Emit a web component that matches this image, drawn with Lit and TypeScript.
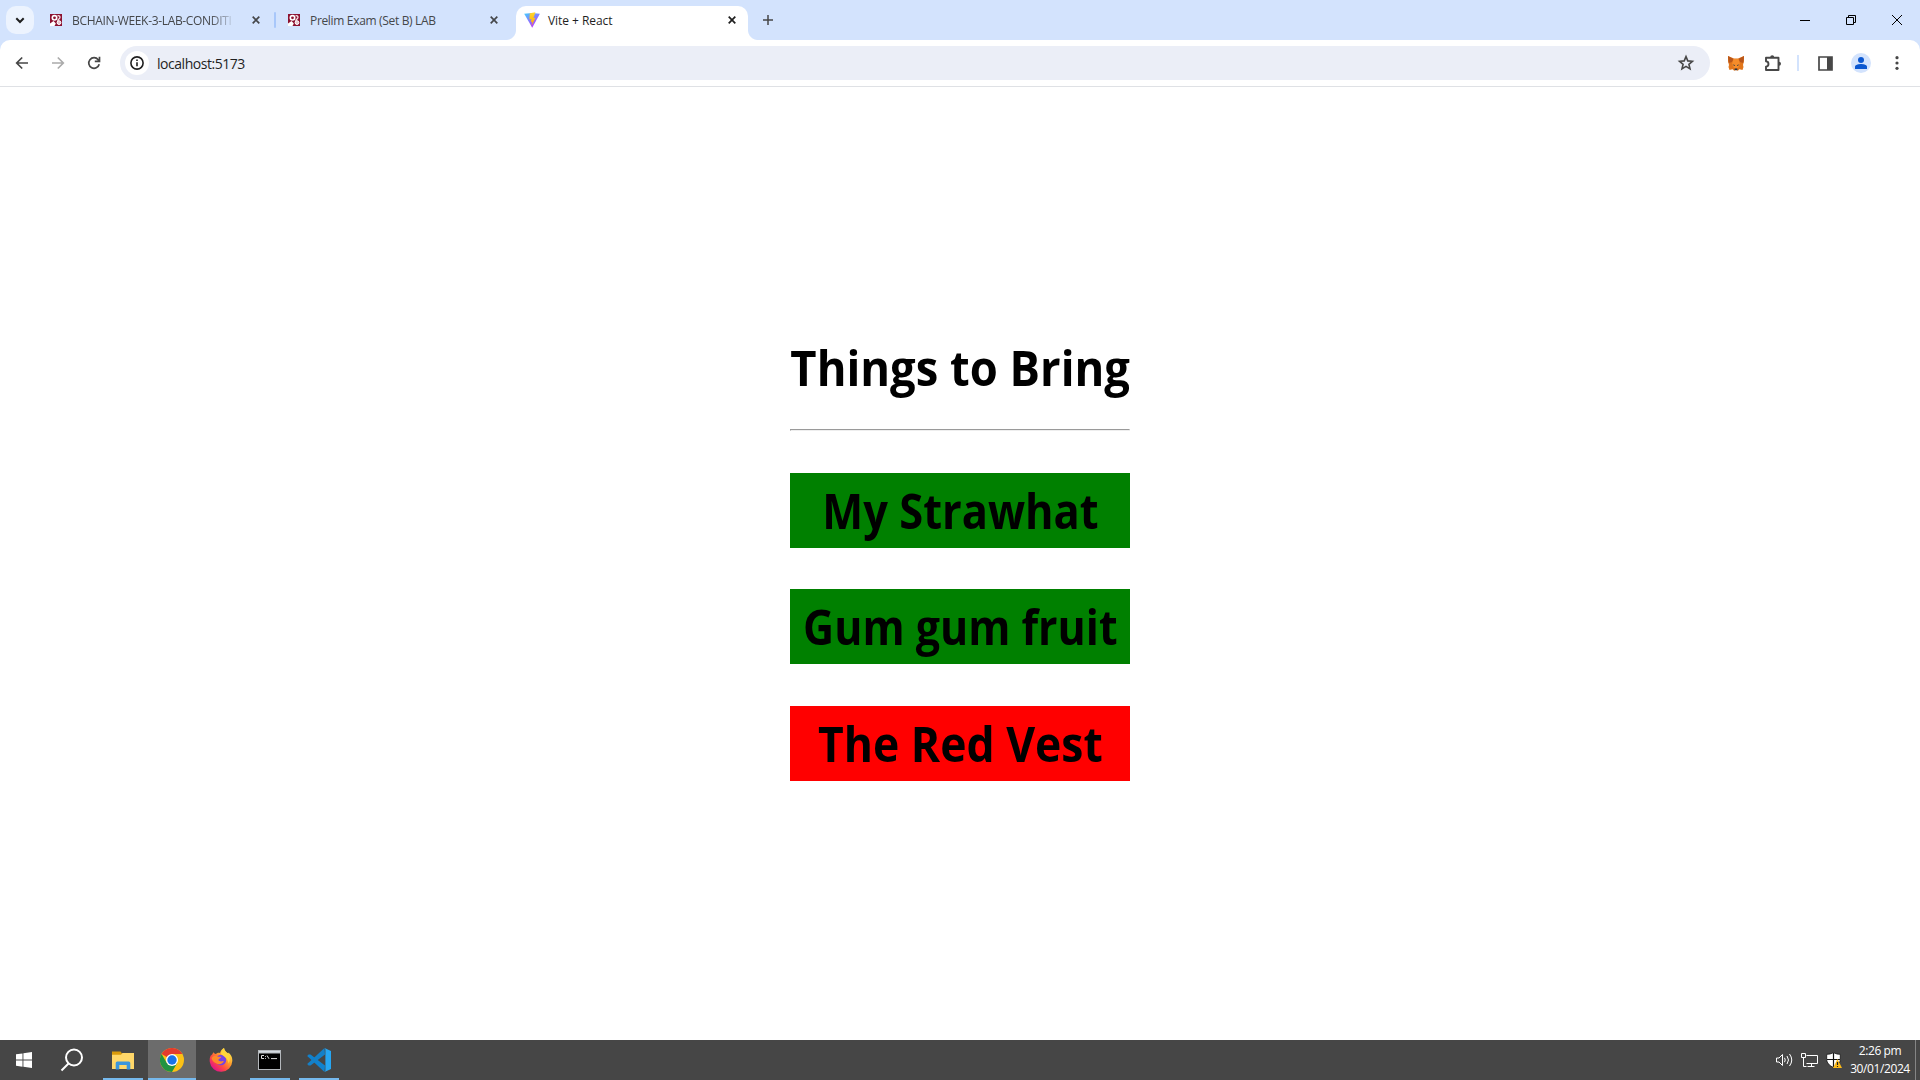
import { LitElement, html, css } from "lit";
import { customElement, property } from "lit/decorators.js";

const cross = html`<svg class="x" width="8" height="8" viewBox="0 0 8 8"><path d="M.7.7 7.3 7.3M7.3.7.7 7.3" stroke="currentColor" stroke-width="1.7"/></svg>`;

const schoolIcon = html`<svg width="12" height="12" viewBox="0 0 12 12"><path fill="#8c1230" d="M0 0h12v12H0z"/><circle cx="4.500" cy="3.800" r="2.200" fill="none" stroke="#fff" stroke-width="1.600"/><path d="M0 12V9.500L3.500 7l2.300 2.500L4.500 12z" fill="#fff"/><path d="M7.500 1.800c2-.6 3 .8 2.200 2.400L8 6v4" fill="none" stroke="#f3dce1" stroke-width="1.400"/><circle cx="9" cy="8.600" r="1.900" fill="#e9c3cc" stroke="#fff"/></svg>`;

const viteIcon = html`<svg width="16" height="16" viewBox="0 0 16 16"><defs><linearGradient id="va" x1="0" y1="0" x2=".6" y2="1"><stop stop-color="#41d1ff"/><stop offset="1" stop-color="#bd34fe"/></linearGradient><linearGradient id="vb" x1="0" y1="0" x2="0" y2="1"><stop stop-color="#ffd62e"/><stop offset="1" stop-color="#ffa800"/></linearGradient></defs><path fill="url(#va)" d="M.2 1.800 8 .9l7.900.9L8.200 15.800z"/><path fill="url(#vb)" d="M11.400.2 5.800 1.300 5.400 7.500l2-.4-.6 3 1.600-.4-.9 4.300 4-8.300-2 .4z"/></svg>`;

const icons = {
  start: html`<svg width="16" height="16" viewBox="0 0 16 16" fill="#fff"><path d="M0 2.300 6.500 1.400v6.200H0zM7.400 1.300 16 0v7.600H7.400zM0 8.500h6.500v6.200L0 13.800zM7.400 8.500H16V16l-8.600-1.300z"/></svg>`,
  search: html`<svg width="24" height="24" viewBox="0 0 24 24" fill="none" stroke="#fff" stroke-width="2"><circle cx="14" cy="9.500" r="8"/><path d="M8.500 15.500 1.500 22.500"/></svg>`,
  explorer: html`<svg width="22" height="19" viewBox="0 0 22 19"><path fill="#d99a0b" d="M0 .5h8.500l1.500 2H22V5H0z"/><path fill="#ffd769" d="M0 3.800h9L10.500 2H22v16H0z"/><path fill="#3a96dd" d="M3.700 18.500V12q0-1.500 1.500-1.500h11.600q1.500 0 1.500 1.500v6.500h-3.600V14H7.300v4.500z"/></svg>`,
  chrome: html`<svg width="24" height="24" viewBox="0 0 24 24"><circle cx="12" cy="12" r="12" fill="#fbc116"/><path fill="#e33b2e" d="M12 12 1.600 6A12 12 0 0 1 22.400 6H12z"/><path fill="#229342" d="M1.600 6A12 12 0 0 0 12 24l5.200-9L12 12 6.800 15z"/><circle cx="12" cy="12" r="6" fill="#fff"/><circle cx="12" cy="12" r="4.700" fill="#1a73e8"/></svg>`,
  firefox: html`<svg width="24" height="24" viewBox="0 0 24 24"><defs><linearGradient id="fa" x1=".9" y1=".1" x2=".2" y2=".9"><stop stop-color="#fff44f"/><stop offset=".4" stop-color="#ff9a2b"/><stop offset=".7" stop-color="#ff4a45"/><stop offset="1" stop-color="#e31587"/></linearGradient></defs><path fill="url(#fa)" d="M4.500 4.200c.6 1 1.300 1.600 2.300 1.800C8.500 4.500 10 4.600 11 5c.6-2.200 2-4 4-5 .3 2.800 2.200 4 4.200 5.600l.3-1.200c2.600 2.200 4 5 3.800 8.500A11.300 11.300 0 0 1 .8 14C.3 10.500 1.300 8 2.500 6.600l.2 1.200C3 6.500 3.600 5.200 4.500 4.200z"/><circle cx="12" cy="12" r="5.200" fill="#7542e5"/><path fill="#ff8a2a" d="M2.500 10c2-2.600 5-2.600 6.500-1.300l3.300.1c-.2 1.600-3 2-3 3.200 1.500 2.200 4.400 1.200 5.600.8-.7 3.200-4.800 4.400-7.800 2.500C4 14 3 12 2.500 10z"/><path fill="#ffd43c" d="M15 0c.3 2.800 2.200 4 4.200 5.600 2.200 3 2.300 7 .3 9.900C19.300 10 14 8 12 6c0-2.500 1.300-4.800 3-6z"/></svg>`,
  cmd: html`<svg style="margin-right:2px" width="23" height="20" viewBox="0 0 23 20"><path fill="#b4b8bc" d="M0 0h23v20H0z"/><path fill="#d5dce2" d="M1 1h21v1.500H1z"/><path d="M1 3.500h21V19H1z"/><path d="M6 5.500H3.500v3H6M7.500 6v.8M7.500 8v.8M9 5.500l2 3.300M13 8.600h6" stroke="#ddd" fill="none"/></svg>`,
  code: html`<svg width="24" height="24" viewBox="0 0 24 24"><path fill="#1082cf" d="M1.600 6.600.2 8.100 17.500 24l.5-6.500L3.500 6.500z"/><path fill="#1480c8" d="M.2 15.900l1.400 1.500 1.900.1L18 6.500 17.500 0z"/><path fill="#26a6f2" d="M17.500 0 24 3v18l-6.500 3q.9-.5.900-1.700V1.700q0-1.100-.9-1.700z"/></svg>`,
};

@customElement("browser-tab")
class BrowserTab extends LitElement {
  @property() label = "";
  @property() kind = "school";
  @property({ type: Boolean, reflect: true }) active = false;
  @property({ type: Boolean }) faded = false;
  static styles = css`
    :host { display: flex; align-items: center; box-sizing: border-box; width: 232px; height: 34px; padding: 0 14px 6px 6px; color: #45474a; position: relative; }
    :host([active]) { background: #fff; border-radius: 10px 10px 0 0; color: #1f1f1f; padding: 0 12px 6px 8px; }
    :host([active])::before, :host([active])::after { content: ""; position: absolute; bottom: 0; width: 10px; height: 10px; }
    :host([active])::before { left: -10px; background: radial-gradient(circle at 0 0, transparent 9.500px, #fff 10.500px); }
    :host([active])::after { right: -10px; background: radial-gradient(circle at 100% 0, transparent 9.500px, #fff 10.500px); }
    .icon { display: flex; justify-content: center; width: 16px; margin-right: 8px; }
    .label { flex: none; padding-top: 2px; font: 12px/20px "Open Sans", sans-serif; letter-spacing: -.33px; white-space: nowrap; }
    :host([active]) .label { letter-spacing: -.05px; }
    .fade { -webkit-mask-image: linear-gradient(90deg, #000 86%, rgba(0, 0, 0, .15)); }
    .x { margin-left: auto; display: block; }
  `;
  render() {
    return html`<span class="icon">${this.kind === "vite" ? viteIcon : schoolIcon}</span><span class="label ${this.faded ? "fade" : ""}">${this.label}</span>${cross}`;
  }
}

const things = [
  { name: "My Strawhat", packed: true, scale: 0.912 },
  { name: "Gum gum fruit", packed: true, scale: 0.902 },
  { name: "The Red Vest", packed: false, scale: 0.935 },
];

@customElement("app-root")
class AppRoot extends LitElement {
  static styles = css`
    :host { display: flex; flex-direction: column; width: 1920px; height: 1080px; overflow: hidden; background: #fff; font-family: "Open Sans", sans-serif; }
    svg { display: block; flex: none; }
    .frame { background: #d3e3fd; }
    .tabs { display: flex; height: 40px; align-items: flex-end; }
    .drop { width: 28px; height: 28px; border-radius: 10px; background: #ecf3fe; margin: 0 8px 6px 6px; display: grid; place-items: center; }
    .sep { width: 2px; height: 16px; background: #a8c7fa; border-radius: 1px; margin: 0 2px 12px 0; }
    .second { margin: 0 4px 0 2px; }
    .plus { margin: 0 0 15px 15px; }
    .controls { display: flex; margin-left: auto; height: 40px; }
    .controls span { width: 46px; display: grid; place-items: center; }
    .toolbar { display: flex; align-items: center; box-sizing: border-box; height: 47px; background: #fff; border-radius: 10px 10px 0 0; border-bottom: 1px solid #dfe1e5; color: #474747; }
    .nav { display: flex; gap: 20px; padding-left: 14px; }
    .address { display: flex; align-items: center; box-sizing: border-box; width: 1590px; height: 34px; border-radius: 17px; background: #ebeef7; margin-left: 18px; padding: 0 15px 0 5px; font-size: 14px; letter-spacing: -.46px; color: #1f1f1f; }
    .info { width: 24px; height: 24px; border-radius: 50%; background: #fff; display: grid; place-items: center; margin-right: 8px; }
    .address .star { margin-left: auto; color: #474747; }
    .tools { display: flex; align-items: center; }
    .fox { margin-left: 18px; }
    .puzzle { margin-left: 20px; }
    .dots { margin-left: 8px; }
    .divider { width: 2px; height: 16px; background: #d3e3fd; margin: 0 19px 0 15px; }
    .avatar { width: 20px; height: 20px; border-radius: 50%; background: #d3e3fd; display: grid; place-items: center; margin: 0 16px 0 18px; }
    .page { flex: 1; display: flex; flex-direction: column; align-items: center; padding-top: 248px; box-sizing: border-box; color: #000; }
    .list { width: 340px; }
    .big { font: bold 47.600px/65px "Open Sans", sans-serif; white-space: nowrap; display: flex; justify-content: center; }
    .big span { display: block; flex: none; }
    .title { transform: scaleX(.953); }
    hr { margin: 29px 0 42px; height: 0; border: 1px solid; border-color: #9a9a9a #eee #eee #9a9a9a; }
    .item { height: 75px; margin-bottom: 42px; box-sizing: border-box; padding-top: 5px; }
    .item:nth-of-type(2) { margin-bottom: 41px; }
    .yes { background: #008000; }
    .no { background: #f00; }
    .taskbar { height: 40px; display: flex; background: #464646; color: #fff; }
    .cell { box-sizing: border-box; width: 48px; height: 40px; margin-right: 1px; display: grid; place-items: center; }
    .flat { margin-right: 0; }
    .search { margin-right: 3px; }
    .run { background: linear-gradient(#76b9ed, #76b9ed) center bottom / 40px 2px no-repeat; }
    .current { background: linear-gradient(#76b9ed, #76b9ed) center bottom / 48px 2px no-repeat #6c6c6c; }
    .tray { margin-left: auto; display: flex; align-items: center; gap: 8px; }
    .clock { font-size: 12px; line-height: 18px; letter-spacing: -.4px; text-align: center; width: 60px; white-space: nowrap; }
    .show { border-left: 1px solid #858585; width: 4px; height: 40px; margin-left: -3px; }
  `;

  render() {
    return html`
      <div class="frame">
        <div class="tabs">
          <div class="drop"><svg width="10" height="7" viewBox="0 0 10 7"><path d="m1.300 1.300 3.700 3.700 3.700-3.700" fill="none" stroke="#1f1f1f" stroke-width="2"/></svg></div>
          <browser-tab faded label="BCHAIN-WEEK-3-LAB-CONDITI"></browser-tab>
          <i class="sep"></i>
          <browser-tab class="second" label="Prelim Exam (Set B) LAB"></browser-tab>
          <browser-tab active kind="vite" label="Vite + React"></browser-tab>
          <svg class="plus" width="10" height="10" viewBox="0 0 10 10"><path d="M5 0v10M0 5h10" stroke="#474747" stroke-width="1.500"/></svg>
          <div class="controls">
            <span><svg width="10" height="10" viewBox="0 0 10 10"><path d="M0 5.500h10" stroke="#000"/></svg></span>
            <span><svg width="10" height="10" viewBox="0 0 10 10" fill="none" stroke="#000"><path d="M.5 2.500h7v7h-7zM2.500 2.500v-2h7v7h-2"/></svg></span>
            <span><svg width="10" height="10" viewBox="0 0 10 10"><path d="m0 0 10 10M10 0 0 10" stroke="#000"/></svg></span>
          </div>
        </div>
        <div class="toolbar">
          <div class="nav">
            <svg width="16" height="16" viewBox="0 0 16 16" fill="none" stroke="#474747" stroke-width="1.700"><path d="M14 8H3M8.200 2.500 2.700 8l5.500 5.500"/></svg>
            <svg width="16" height="16" viewBox="0 0 16 16" fill="none" stroke="#ababab" stroke-width="1.700"><path d="M2 8h11M7.800 2.500 13.300 8l-5.500 5.500"/></svg>
            <svg width="16" height="16" viewBox="0 0 16 16" fill="none" stroke="#474747" stroke-width="1.700"><path d="M13.200 9.300A5.300 5.300 0 1 1 12.200 4.700L13.300 6M13.500 1.700v4.700H8.800"/></svg>
          </div>
          <div class="address">
            <span class="info"><svg width="14" height="14" viewBox="0 0 14 14"><circle cx="7" cy="7" r="6.100" fill="none" stroke="#1f1f1f" stroke-width="1.600"/><path d="M7 6.200v4.100M7 3.500v1.600" stroke="#1f1f1f" stroke-width="1.600"/></svg></span>
            <span>localhost:5173</span>
            <svg class="star" width="18" height="18" viewBox="0 0 18 18"><path d="m9 2.600 1.800 4.300 4.600.4-3.500 3 1.100 4.600-4-2.500-4 2.500 1.100-4.600-3.500-3 4.600-.4z" fill="none" stroke="currentColor" stroke-width="1.600"/></svg>
          </div>
          <div class="tools">
            <svg class="fox" width="16" height="15" viewBox="0 0 16 15"><path fill="#e2761b" d="M0 0l6 2.500h4L16 0v5l-1 4 .5 2-1 3-3-.7L9.500 15h-3l-2-1.700-3 .7-1-3L1 9 0 5z"/><path fill="#b8561b" d="m0 0 5.500 3L4 6 .7 7zM16 0l-5.500 3L12 6l3.300 1z"/><path fill="#f58c2a" d="M5.500 3h5l1.500 5-2 4H6L4 8z"/><path fill="#233447" d="M4.500 8.500 7 9l-.5 1zM11.500 8.500 9 9l.5 1zM6.800 12.500h2.400l.3 1.500h-3z"/><path fill="#d8c4b4" d="M6.500 14h3v1h-3z"/></svg>
            <svg class="puzzle" width="18" height="18" viewBox="0 0 18 18"><path d="M2 3.700h12.500v12.300H2v-3.400c3.300-.4 3.300-5 0-5.400z" fill="none" stroke="#474747" stroke-width="1.900" stroke-linejoin="round"/><path fill="#474747" d="M6.200 3.300a2 2 0 0 1 4 0zM15 7.800a2 2 0 0 1 0 4z"/></svg>
            <i class="divider"></i>
            <svg width="15" height="15" viewBox="0 0 15 15"><path d="M1 1h13v13H1z" fill="none" stroke="#474747" stroke-width="1.700"/><path fill="#474747" d="M9 1h5v13H9z"/></svg>
            <span class="avatar"><svg width="12" height="12" viewBox="0 0 12 12" fill="#0b57d0"><circle cx="6" cy="3" r="3"/><path d="M0 12V9.800C0 7.800 3.500 7 6 7s6 .8 6 2.800V12z"/></svg></span>
            <svg class="dots" width="4" height="14" viewBox="0 0 4 14" fill="#474747"><circle cx="2" cy="1.700" r="1.600"/><circle cx="2" cy="7" r="1.600"/><circle cx="2" cy="12.300" r="1.600"/></svg>
          </div>
        </div>
      </div>
      <main class="page">
        <div class="list">
          <div class="big"><span class="title">Things to Bring</span></div>
          <hr />
          ${things.map((t) => html`<div class="big item ${t.packed ? "yes" : "no"}"><span style="transform:scaleX(${t.scale})">${t.name}</span></div>`)}
        </div>
      </main>
      <div class="taskbar">
        <span class="cell flat">${icons.start}</span>
        <span class="cell search">${icons.search}</span>
        <span class="cell run">${icons.explorer}</span>
        <span class="cell current">${icons.chrome}</span>
        <span class="cell">${icons.firefox}</span>
        <span class="cell run">${icons.cmd}</span>
        <span class="cell run">${icons.code}</span>
        <div class="tray">
          <svg width="17" height="14" viewBox="0 0 17 14" fill="none" stroke="#fff"><path d="M.5 5h2.500l3.500-3.500v11L3 9H.5zM8.500 4.800q1.500 2.200 0 4.400M11 3q3 4 0 8M13.500 1q4.500 6 0 12"/></svg>
          <svg width="17" height="14" viewBox="0 0 17 14" fill="none" stroke="#fff"><path d="M5.500 2.500h11v8h-11M10.500 10.500v3M6.500 13.500h7M.5.500h4v4h-4zM2.500 4.500v9h3"/></svg>
          <svg width="16" height="16" viewBox="0 0 16 16"><path fill="#fff" stroke="#111" stroke-width=".8" d="M7.500.5c2 1.300 4.300 1.800 6.800 1.800v5c0 3.500-2.800 6.500-6.800 8.200C3.500 13.800.7 10.800.7 7.300v-5c2.500 0 4.800-.5 6.800-1.800z"/><path stroke="#111" stroke-width="1.200" d="M7.500 1v14M1 7.500h13"/><path fill="#fbb917" d="m11.500 7 4.500 9H7z"/><path stroke="#222" stroke-width="1.200" d="M11.500 10v3M11.500 14v1"/></svg>
          <div class="clock">2:26 pm<br />30/01/2024</div>
          <i class="show"></i>
        </div>
      </div>`;
  }
}
